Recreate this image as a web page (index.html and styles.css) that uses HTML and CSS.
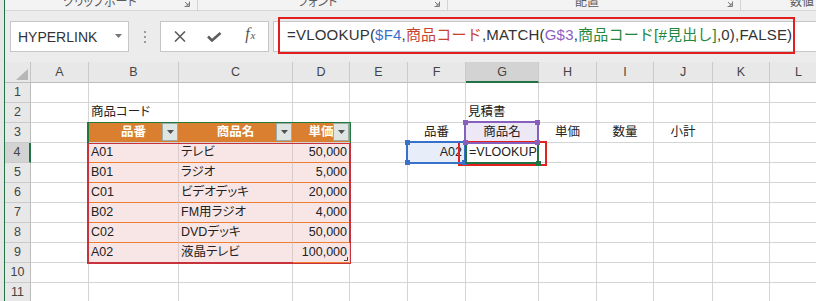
FILE: index.html
```html
<!DOCTYPE html>
<html lang="ja">
<head>
<meta charset="utf-8">
<title>Excel VLOOKUP</title>
<link rel="stylesheet" href="styles.css">
</head>
<body>
<div class="app">
  <div class="edge"></div>
  <div class="main">
    <div class="ribbon">
      <div class="grp grp-1"><span class="glabel">クリップボード</span><svg class="launch" width="6" height="6" viewBox="0 0 6 6"><path d="M5.5 0.5V5.5H0.5M1 1L4.2 4.2M4.2 2.2V4.2H2.2" fill="none" stroke="#7a7a7a" stroke-width="1"/></svg></div>
      <div class="grp grp-2"><span class="glabel">フォント</span><svg class="launch" width="6" height="6" viewBox="0 0 6 6"><path d="M5.5 0.5V5.5H0.5M1 1L4.2 4.2M4.2 2.2V4.2H2.2" fill="none" stroke="#7a7a7a" stroke-width="1"/></svg></div>
      <div class="grp grp-3"><span class="glabel">配置</span><svg class="launch" width="6" height="6" viewBox="0 0 6 6"><path d="M5.5 0.5V5.5H0.5M1 1L4.2 4.2M4.2 2.2V4.2H2.2" fill="none" stroke="#7a7a7a" stroke-width="1"/></svg></div>
      <div class="grp grp-4"><span class="glabel">数値</span></div>
    </div>
    <div class="fbar">
      <div class="namebox"><span class="nbtext">HYPERLINK</span><svg class="nbarrow" width="7" height="4" viewBox="0 0 7 4"><path d="M0 0H7L3.5 4Z" fill="#777"/></svg></div>
      <div class="dots"><i></i><i></i><i></i></div>
      <div class="btns">
        <span class="btn"><svg width="12" height="11" viewBox="0 0 12 11"><path d="M1 0.5L11 10.5M11 0.5L1 10.5" stroke="#5e5e5e" stroke-width="1.6" fill="none"/></svg></span>
        <span class="btn"><svg width="15" height="10" viewBox="0 0 15 10"><path d="M1 4.5L5 8.5L13.5 1" stroke="#5e5e5e" stroke-width="2.6" fill="none"/></svg></span>
        <span class="btn fx"><span class="fx-f">f</span><span class="fx-x">x</span></span>
      </div>
      <div class="formula">
        <span class="ftext">=VLOOKUP(<span class="k-blue">$F4</span>,<span class="k-red">商品コード</span>,MATCH(<span class="k-purple">G$3</span>,<span class="k-green">商品コード[#見出し]</span>,0),FALSE)</span>
        <div class="annot"></div>
      </div>
    </div>
    <div class="sheet">
      <div class="cells">
        <div class="c corner"><svg width="12" height="11" viewBox="0 0 12 11"><path d="M12 0V11H0Z" fill="#b6b6b6"/></svg></div>
        <div class="c ch">A</div><div class="c ch">B</div><div class="c ch">C</div><div class="c ch">D</div><div class="c ch">E</div><div class="c ch">F</div><div class="c ch sel">G</div><div class="c ch">H</div><div class="c ch">I</div><div class="c ch">J</div><div class="c ch">K</div><div class="c ch">L</div>

        <div class="c rh">1</div><div class="c"></div><div class="c"></div><div class="c"></div><div class="c"></div><div class="c"></div><div class="c"></div><div class="c"></div><div class="c"></div><div class="c"></div><div class="c"></div><div class="c"></div><div class="c"></div>

        <div class="c rh">2</div><div class="c"></div><div class="c">商品コード</div><div class="c"></div><div class="c"></div><div class="c"></div><div class="c"></div><div class="c">見積書</div><div class="c"></div><div class="c"></div><div class="c"></div><div class="c"></div><div class="c"></div>

        <div class="c rh">3</div><div class="c"></div>
        <div class="c th">品番<span class="dd"><svg width="7" height="4" viewBox="0 0 7 4"><path d="M0 0H7L3.5 4Z" fill="#505050"/></svg></span></div>
        <div class="c th">商品名<span class="dd"><svg width="7" height="4" viewBox="0 0 7 4"><path d="M0 0H7L3.5 4Z" fill="#505050"/></svg></span></div>
        <div class="c th">単価<span class="dd"><svg width="7" height="4" viewBox="0 0 7 4"><path d="M0 0H7L3.5 4Z" fill="#505050"/></svg></span></div>
        <div class="c"></div><div class="c ctr">品番</div><div class="c ctr cell-g3">商品名</div><div class="c ctr">単価</div><div class="c ctr">数量</div><div class="c ctr">小計</div><div class="c"></div><div class="c"></div>

        <div class="c rh sel">4</div><div class="c"></div><div class="c td">A01</div><div class="c td">テレビ</div><div class="c td r">50,000</div><div class="c"></div><div class="c r cell-f4">A02</div><div class="c cell-g4">=VLOOKUP(</div><div class="c"></div><div class="c"></div><div class="c"></div><div class="c"></div><div class="c"></div>

        <div class="c rh">5</div><div class="c"></div><div class="c td">B01</div><div class="c td">ラジオ</div><div class="c td r">5,000</div><div class="c"></div><div class="c"></div><div class="c"></div><div class="c"></div><div class="c"></div><div class="c"></div><div class="c"></div><div class="c"></div>

        <div class="c rh">6</div><div class="c"></div><div class="c td">C01</div><div class="c td">ビデオデッキ</div><div class="c td r">20,000</div><div class="c"></div><div class="c"></div><div class="c"></div><div class="c"></div><div class="c"></div><div class="c"></div><div class="c"></div><div class="c"></div>

        <div class="c rh">7</div><div class="c"></div><div class="c td">B02</div><div class="c td">FM用ラジオ</div><div class="c td r">4,000</div><div class="c"></div><div class="c"></div><div class="c"></div><div class="c"></div><div class="c"></div><div class="c"></div><div class="c"></div><div class="c"></div>

        <div class="c rh">8</div><div class="c"></div><div class="c td">C02</div><div class="c td">DVDデッキ</div><div class="c td r">50,000</div><div class="c"></div><div class="c"></div><div class="c"></div><div class="c"></div><div class="c"></div><div class="c"></div><div class="c"></div><div class="c"></div>

        <div class="c rh">9</div><div class="c"></div><div class="c td">A02</div><div class="c td">液晶テレビ</div><div class="c td r last">100,000<svg class="resize" width="4" height="4" viewBox="0 0 4 4"><path d="M3.5 0V3.5H0" stroke="#444" stroke-width="1" fill="none"/></svg></div><div class="c"></div><div class="c"></div><div class="c"></div><div class="c"></div><div class="c"></div><div class="c"></div><div class="c"></div><div class="c"></div>

        <div class="c rh">10</div><div class="c"></div><div class="c"></div><div class="c"></div><div class="c"></div><div class="c"></div><div class="c"></div><div class="c"></div><div class="c"></div><div class="c"></div><div class="c"></div><div class="c"></div><div class="c"></div>

        <div class="c rh">11</div><div class="c"></div><div class="c"></div><div class="c"></div><div class="c"></div><div class="c"></div><div class="c"></div><div class="c"></div><div class="c"></div><div class="c"></div><div class="c"></div><div class="c"></div><div class="c"></div>
      </div>
      <div class="overlay">
        <div class="ov-red"></div>
        <div class="ov-green"></div>
        <div class="ov-blue"><span class="sq tl"></span><span class="sq bl"></span><span class="sq br"></span></div>
        <div class="ov-active"><span class="fh"></span></div>
        <div class="ov-purple"><span class="sq tl"></span><span class="sq tr"></span><span class="sq bl"></span><span class="sq br"></span></div>
        <div class="ov-annot"></div>
      </div>
    </div>
  </div>
</div>
</body>
</html>
```

FILE: styles.css
```css
* { box-sizing: border-box; }
html, body { margin: 0; padding: 0; }
body {
  width: 816px;
  height: 301px;
  overflow: hidden;
  background: #ffffff;
  font-family: "Liberation Sans", "Noto Sans CJK JP", sans-serif;
}
.app {
  display: flex;
  width: 816px;
  height: 301px;
  overflow: hidden;
}
.edge {
  flex: none;
  width: 5px;
  background: #e6e6e6;
  border-right: 1px solid #217346;
}
.main {
  flex: 1;
  min-width: 0;
  display: flex;
  flex-direction: column;
}

/* ribbon strip */
.ribbon {
  flex: none;
  height: 11px;
  display: flex;
  background: #f3f3f3;
  border-bottom: 1px solid #d6d6d6;
  overflow: hidden;
}
.grp {
  flex: none;
  height: 10px;
  display: flex;
  align-items: flex-start;
  border-right: 1px solid #d3d3d3;
}
.grp-1 { width: 193px; padding-left: 58px; }
.grp-2 { width: 250px; padding-left: 100px; }
.grp-3 { width: 293px; padding-left: 127px; }
.grp-4 { flex: 1; padding-left: 49px; border-right: none; }
.glabel {
  font-family: "Noto Sans CJK JP", sans-serif;
  font-feature-settings: "palt";
  font-size: 12px;
  line-height: 12px;
  color: #5c5c5c;
  margin-top: -5px;
  white-space: nowrap;
}
.launch { margin-left: auto; margin-right: 7px; margin-top: 1px; }

/* formula bar */
.fbar {
  flex: none;
  height: 51px;
  display: flex;
  align-items: flex-start;
  padding: 10px 0 0 5px;
  background: #ececec;
}
.namebox {
  flex: none;
  width: 119px;
  height: 31px;
  background: #ffffff;
  border: 1px solid #c6c6c6;
  display: flex;
  align-items: flex-start;
  padding: 2px 6px 0 7px;
}
.nbtext {
  font-size: 14px;
  line-height: 27px;
  color: #333333;
}
.nbarrow { margin-left: auto; margin-top: 10px; }
.dots {
  flex: none;
  width: 31px;
  height: 31px;
  display: flex;
  flex-direction: column;
  align-items: center;
  gap: 3px;
  padding-top: 10px;
}
.dots i {
  display: block;
  width: 2px;
  height: 2px;
  background: #9a9a9a;
}
.btns {
  flex: none;
  width: 109px;
  height: 31px;
  background: #ffffff;
  border: 1px solid #c6c6c6;
  display: flex;
  align-items: center;
  padding-left: 1px;
}
.btn {
  width: 36px;
  height: 29px;
  display: flex;
  align-items: center;
  justify-content: center;
}
.fx { font-family: "Liberation Serif", serif; font-style: italic; color: #555555; align-items: baseline; padding-top: 2px; }
.fx-f { font-size: 16px; line-height: 20px; }
.fx-x { font-size: 11px; line-height: 20px; margin-left: 1px; }
.formula {
  flex: 1;
  height: 31px;
  margin-left: 4px;
  background: #ffffff;
  border: 1px solid #c6c6c6;
  border-right: none;
  position: relative;
  padding-left: 13px;
  font-size: 15px;
  line-height: 26px;
  white-space: nowrap;
  color: #333333;
}
.ftext { letter-spacing: 0.2px; }
.k-blue { color: #3a70cc; }
.k-red { color: #c9402f; }
.k-purple { color: #8a5ec4; }
.k-green { color: #23883d; }
.annot {
  position: absolute;
  left: 4px;
  top: -5px;
  width: 517px;
  height: 37px;
  border: 2px solid #e21f1f;
}

/* sheet */
.sheet {
  flex: none;
  display: grid;
}
.cells, .overlay {
  grid-area: 1 / 1;
  display: grid;
  grid-template-columns: 26px 58px 90px 114px 57px 58px 58px 73px 58px 57px 59px 57px 58px;
  grid-template-rows: 21px repeat(11, 20px);
}
.overlay { pointer-events: none; }
.c {
  border-right: 1px solid #d5d5d5;
  border-bottom: 1px solid #d5d5d5;
  font-size: 12.5px;
  line-height: 19px;
  padding: 0 2px;
  white-space: nowrap;
  color: #222222;
  font-feature-settings: "palt";
}
.corner {
  background: #e8e8e8;
  border-right-color: #c4c4c4;
  border-bottom-color: #bdbdbd;
  display: flex;
  align-items: flex-end;
  justify-content: flex-end;
  padding: 0 2px 2px 0;
}
.ch {
  background: #e8e8e8;
  border-right-color: #cacaca;
  border-bottom-color: #bdbdbd;
  text-align: center;
  line-height: 20px;
  color: #444444;
}
.ch.sel {
  background: #d3d3d3;
  border-bottom: 2px solid #217346;
}
.rh {
  background: #e8e8e8;
  border-right-color: #bdbdbd;
  border-bottom-color: #cacaca;
  text-align: center;
  color: #444444;
}
.rh.sel {
  background: #d3d3d3;
  border-right: 2px solid #217346;
}
.th {
  position: relative;
  background: #d97f2f;
  border-right-color: #d97f2f;
  color: #ffffff;
  font-weight: bold;
  text-align: center;
}
.dd {
  position: absolute;
  right: 0;
  top: 0;
  width: 16px;
  height: 18px;
  background: #dfe5e2;
  border: 1px solid #9faba7;
  display: flex;
  align-items: center;
  justify-content: center;
}
.td {
  background: #f8e6e6;
  border-bottom-color: #ee7d31;
  border-right-color: #dccbcb;
}
.r { text-align: right; }
.ctr { text-align: center; }
.cell-f4 { background: #e7eef9; padding-right: 3px; }
.cell-g3 { background: #ede8f5; }
.cell-g4 { overflow: hidden; padding-left: 3px; }
.last { position: relative; }
.resize { position: absolute; right: 1px; bottom: 1px; }

/* overlays */
.ov-red {
  grid-column: 3 / 6;
  grid-row: 5 / 11;
  margin: -1px -1px -1px -2px;
  border: 2px solid #c7323b;
}
.ov-green {
  grid-column: 3 / 6;
  grid-row: 4 / 5;
  margin: -1px -1px 0 -2px;
  border: 2px solid #1f7a3c;
}
.ov-blue {
  grid-column: 7 / 8;
  grid-row: 5 / 6;
  margin: -2px 0 -1px -2px;
  border: 2px solid #3a71c8;
  position: relative;
}
.ov-blue .sq { background: #3a71c8; }
.ov-active {
  grid-column: 8 / 9;
  grid-row: 5 / 6;
  margin: -1px 0 -1px -1px;
  border: 2px solid #217346;
  position: relative;
}
.ov-purple {
  grid-column: 8 / 9;
  grid-row: 4 / 5;
  margin: -2px 0 -1px -2px;
  border: 2px solid #8660bd;
  position: relative;
}
.ov-purple .sq { background: #8660bd; }
.ov-annot {
  grid-column: 8 / 9;
  grid-row: 5 / 6;
  margin: -2px -8px -3px -8px;
  border: 2px solid #e3211f;
}
.sq {
  position: absolute;
  width: 5px;
  height: 5px;
}
.sq.tl { left: -3px; top: -3px; }
.sq.tr { right: -3px; top: -3px; }
.sq.bl { left: -3px; bottom: -3px; }
.sq.br { right: -3px; bottom: -3px; }
.fh {
  position: absolute;
  right: -4px;
  bottom: -4px;
  width: 5px;
  height: 5px;
  background: #217346;
}
```
